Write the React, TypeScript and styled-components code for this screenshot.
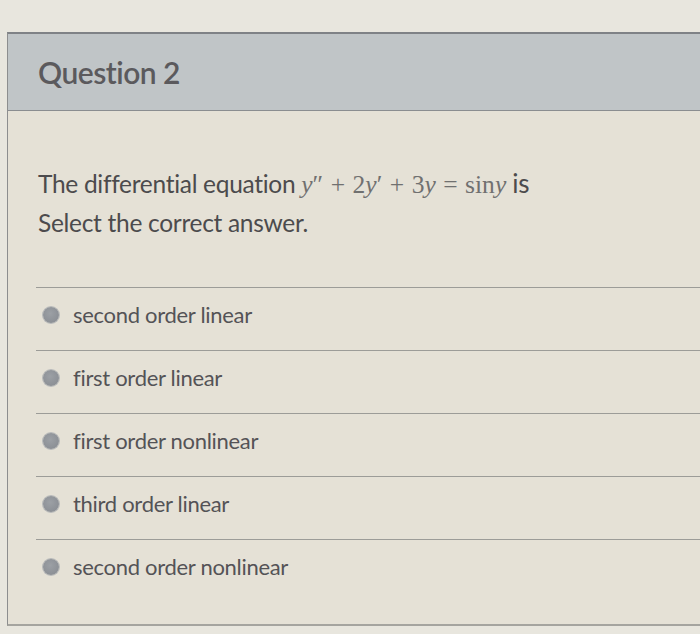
import React from "react";
import styled, { createGlobalStyle } from "styled-components";

const Global = createGlobalStyle`
  html, body { margin: 0; padding: 0; }
  body {
    background: #e8e6de;
    width: 700px;
    height: 634px;
    overflow: hidden;
    font-family: Lato, "Open Sans", sans-serif;
  }
`;

const Page = styled.div`
  padding: 32px 0 0 7px;
  height: 634px;
  box-sizing: border-box;
`;

const Panel = styled.section`
  height: 594px;
  box-sizing: border-box;
  background: #e5e1d6;
  border-left: 1px solid #8d8e8f;
  border-top: 2px solid #7f8286;
  border-bottom: 2px solid #a5a49f;
  display: flex;
  flex-direction: column;
`;

const Header = styled.header`
  height: 77px;
  box-sizing: border-box;
  background: #c0c5c7;
  border-bottom: 1px solid #8a8d90;
  padding-left: 30px;
  display: flex;
  align-items: center;
`;

const Title = styled.h2`
  margin: 0;
  font-family: Lato, sans-serif;
  font-weight: 600;
  font-size: 30px;
  color: #5b5a5d;
  letter-spacing: -0.5px;
`;

const Body = styled.div`
  padding: 53px 0 0 30px;
`;

const QuestionText = styled.div`
  font-size: 24.5px;
  line-height: 38px;
  color: #4c4b4d;
  letter-spacing: -0.3px;
`;

const Math = styled.span`
  font-family: "Liberation Serif", "Times New Roman", serif;
  font-size: 25.5px;
  color: #707070;
  margin: 0 6px 0 6px;
  letter-spacing: 0px;
`;

const V = styled.i`
  font-style: italic;
`;

const Op = styled.span`
  margin: 0 7.5px;
`;

const Is = styled.span`
  font-size: 26px;
`;

const Options = styled.ul`
  list-style: none;
  margin: 45px 0 0 -2px;
  padding: 0;
`;

const Option = styled.li`
  height: 63px;
  box-sizing: border-box;
  border-top: 1px solid #9c9c98;
  display: flex;
  align-items: center;
  padding: 0 0 9px 7px;
  gap: 14px;
`;

const Radio = styled.span`
  width: 16px;
  height: 16px;
  border-radius: 50%;
  background: radial-gradient(circle at 45% 40%, #9ca0a5 0%, #8c9096 70%, #a9acaf 100%);
  box-shadow: 0 0 0 1px #b7b9ba;
  flex: none;
`;

const Label = styled.span`
  font-size: 22px;
  color: #545356;
  letter-spacing: -0.3px;
`;

const answers = [
  "second order linear",
  "first order linear",
  "first order nonlinear",
  "third order linear",
  "second order nonlinear",
];

export default function App() {
  return (
    <>
      <Global />
      <Page>
        <Panel>
          <Header>
            <Title>Question 2</Title>
          </Header>
          <Body>
            <QuestionText>
              The differential equation
              <Math>
                <V>y</V>″<Op>+</Op>2<V>y</V>′<Op>+</Op>3<V>y</V>
                <Op>=</Op>sin<V>y</V>
              </Math>
              <Is>is</Is>
              <br />
              Select the correct answer.
            </QuestionText>
            <Options>
              {answers.map((a) => (
                <Option key={a}>
                  <Radio />
                  <Label>{a}</Label>
                </Option>
              ))}
            </Options>
          </Body>
        </Panel>
      </Page>
    </>
  );
}
